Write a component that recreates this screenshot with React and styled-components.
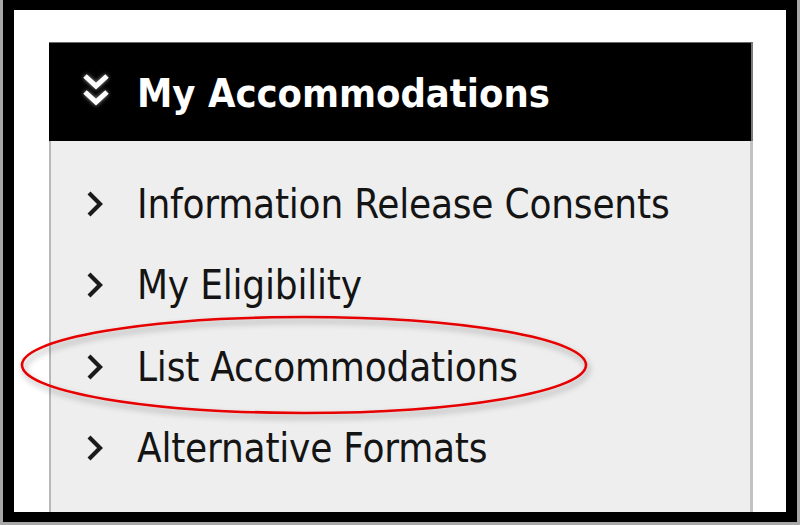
import styled, { createGlobalStyle } from 'styled-components';

const GlobalStyle = createGlobalStyle`
  html, body {
    margin: 0;
    padding: 0;
    background: #a8a8a8;
  }
  body {
    width: 800px;
    height: 525px;
    overflow: hidden;
    font-family: "DejaVu Sans Condensed", "DejaVu Sans", sans-serif;
  }
`;

const Frame = styled.div`
  position: relative;
  box-sizing: border-box;
  margin-left: 3px;
  width: 794px;
  height: 522px;
  border-style: solid;
  border-color: #000;
  border-width: 10px 11px 10px 11px;
  background: #fff;
  padding: 32px 33px 0 35px;
  display: flex;
  flex-direction: column;
  overflow: hidden;
`;

const Panel = styled.div`
  flex: 1;
  display: flex;
  flex-direction: column;
`;

const Header = styled.div`
  box-sizing: border-box;
  height: 99px;
  background: #000;
  border-top: 1px solid #6a6a6a;
  border-right: 2px solid #7a7a7a;
  display: flex;
  align-items: center;
  padding-left: 33px;
  gap: 27px;
`;

const Title = styled.h2`
  margin: 0;
  color: #fff;
  font-size: 39.5px;
  font-weight: bold;
  line-height: 1;
  padding-top: 3px;
`;

const Body = styled.ul`
  flex: 1;
  margin: 0;
  list-style: none;
  background: #eeeeee;
  border-left: 2px solid #b8b8b8;
  border-right: 3px solid #c2c2c2;
  padding: 22px 0 0 0;
`;

const Item = styled.li`
  height: 81.5px;
  display: flex;
  align-items: center;
  padding-left: 33px;
  gap: 31px;
  color: #141414;
  font-size: 40px;
  line-height: 1;
`;

const Label = styled.span`
  letter-spacing: -0.2px;
`;

const Highlight = styled.svg`
  position: absolute;
  left: 0;
  top: 300px;
  overflow: visible;
  pointer-events: none;
`;

const DoubleChevron = () => (
  <svg width="28" height="44" viewBox="0 0 28 44" style={{ filter: 'blur(0.7px) drop-shadow(0 0 2px rgba(255,255,255,0.6))' }}>
    <polyline points="3,6 14,16 25,6" fill="none" stroke="#fff" strokeWidth="5" />
    <polyline points="3,22 14,32 25,22" fill="none" stroke="#fff" strokeWidth="5" />
  </svg>
);

const Chevron = () => (
  <svg width="22" height="30" viewBox="0 0 22 30" style={{ filter: 'blur(0.4px)' }}>
    <polyline points="5,4 16,15 5,26" fill="none" stroke="#1a1a1a" strokeWidth="4.2" />
  </svg>
);

const items = [
  'Information Release Consents',
  'My Eligibility',
  'List Accommodations',
  'Alternative Formats',
];

export default function App() {
  return (
    <>
      <GlobalStyle />
      <Frame>
        <Panel>
          <Header>
            <DoubleChevron />
            <Title>My Accommodations</Title>
          </Header>
          <Body>
            {items.map(label => (
              <Item key={label}>
                <Chevron />
                <Label>{label}</Label>
              </Item>
            ))}
          </Body>
        </Panel>
        <Highlight width="600" height="120">
          <defs>
            <filter id="sh" x="-10%" y="-30%" width="120%" height="170%">
              <feDropShadow dx="2" dy="4" stdDeviation="3" floodColor="#000" floodOpacity="0.35" />
            </filter>
          </defs>
          <ellipse cx="290" cy="55" rx="282" ry="48" fill="none" stroke="#e60000" strokeWidth="2.6" filter="url(#sh)" />
        </Highlight>
      </Frame>
    </>
  );
}
